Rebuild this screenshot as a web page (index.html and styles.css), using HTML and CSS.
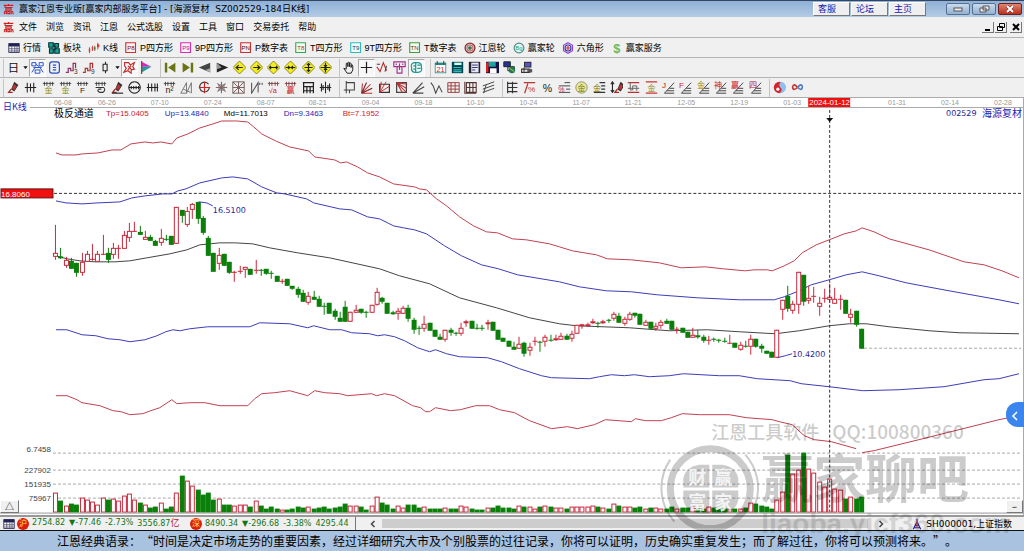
FILE: index.html
```html
<!DOCTYPE html>
<html lang="zh-CN">
<head>
<meta charset="utf-8">
<title>赢家江恩专业版</title>
<link rel="stylesheet" href="styles.css">
</head>
<body>
<div class="app">
  <header class="titlebar">
    <svg class="logo" viewBox="0 0 16 16"><path d="M1 2h14M8 0v2M3 2v3h11M4 7h8v2H4zM2 11v4M2 11h3v4M3 13h2M7 11v3h3v-3zM12 11v4M12 11h2l1 4" fill="none" stroke="#c22" stroke-width="1.5"/></svg>
    <h1 class="title">赢家江恩专业版[赢家内部服务平台] - [海源复材&nbsp; SZ002529-184日K线]</h1>
    <nav class="links"><a href="#service">客服</a><a href="#forum">论坛</a><a href="#home">主页</a></nav>
    <div class="window-controls">
      <button aria-label="最小化"><svg viewBox="0 0 12 8"><rect x="2" y="3" width="8" height="3" fill="#eee" stroke="#555"/></svg></button>
      <button aria-label="还原"><svg viewBox="0 0 12 8"><path d="M5 1h6v4H5zM2 3h6v4H2z" fill="#eee" stroke="#555"/></svg></button>
      <button class="close" aria-label="关闭"><svg viewBox="0 0 12 8"><path d="M3 1l6 6M9 1L3 7" stroke="#722" stroke-width="3"/><path d="M3 1l6 6M9 1L3 7" stroke="#fff" stroke-width="2"/></svg></button>
    </div>
  </header>

  <div class="menubar">
    <svg class="logo" viewBox="0 0 16 16"><path d="M1 2h14M8 0v2M3 2v3h11M4 7h8v2H4zM2 11v4M2 11h3v4M3 13h2M7 11v3h3v-3zM12 11v4M12 11h2l1 4" fill="none" stroke="#c22" stroke-width="1.5"/></svg>
    <nav class="menu">
      <button>文件</button><button>浏览</button><button>资讯</button><button>江恩</button><button>公式选股</button><button>设置</button><button>工具</button><button>窗口</button><button>交易委托</button><button>帮助</button>
    </nav>
    <div class="mdi-controls">
      <button aria-label="最小化窗口"><svg viewBox="0 0 10 8"><path d="M2 7h5" stroke="#000" stroke-width="2"/></svg></button>
      <button aria-label="还原窗口"><svg viewBox="0 0 10 8"><path d="M3.500 .5h5v4h-5zM1.500 3.500h5v4h-5z" fill="#eee" stroke="#000"/></svg></button>
      <button class="mdi-close" aria-label="关闭窗口"><svg viewBox="0 0 10 8"><path d="M2 1l6 6M8 1L2 7" stroke="#000" stroke-width="2"/></svg></button>
    </div>
  </div>

  <div class="toolbar views">
    <button><svg class="icon" viewBox="0 0 16 16"><path d="M1 2h14v12H1z" fill="#fff" stroke="#114"/><path d="M1 2h14v4H1z" fill="#225"/><path d="M1 9h14M1 12h14M5 6v8M9 6v8M12 6v8" stroke="#446"/></svg>行情</button>
    <button><svg class="icon" viewBox="0 0 16 16"><path d="M1 1h6v6H1zM9 2h5v5H9zM2 9h5v6H2zM9 9h6v6H9z" fill="#1aa39a" stroke="#033" stroke-width="1.500"/><path d="M7 4l3 3M7 11l4-3" stroke="#033" stroke-width="2"/></svg>板块</button>
    <button><svg class="icon" viewBox="0 0 16 16"><path d="M2 7v8M6 5v7M9 5v7M13 1v9" stroke="#b22"/><path d="M1 9h2v4H1zM5 7h2v3H5z" fill="#d33"/><path d="M8 7h2v3H8z" fill="#284"/><path d="M12 3h3v4h-3z" fill="#d33"/></svg>K线</button>
    <button><svg class="icon" viewBox="0 0 16 16"><path d="M1 1h13v13H1z" fill="#fee" stroke="#c33" stroke-width="1.500"/><text x="3" y="11" font-size="8" fill="#711">P8</text></svg>P四方形</button>
    <button><svg class="icon" viewBox="0 0 16 16"><path d="M1 1h13v13H1z" fill="#fef" stroke="#c3a" stroke-width="1.500"/><text x="3" y="11" font-size="8" fill="#928">P9</text></svg>9P四方形</button>
    <button><svg class="icon" viewBox="0 0 16 16"><path d="M1 1h13v13H1z" fill="#fee" stroke="#b33" stroke-width="1.500"/><text x="2" y="11" font-size="8" fill="#311">PN</text></svg>P数字表</button>
    <button><svg class="icon" viewBox="0 0 16 16"><path d="M1 1h13v13H1z" fill="#efe" stroke="#3a5" stroke-width="1.500"/><text x="3" y="11" font-size="8" fill="#a33">T8</text></svg>T四方形</button>
    <button><svg class="icon" viewBox="0 0 16 16"><path d="M1 1h13v13H1z" fill="#eff" stroke="#3bb" stroke-width="1.500"/><text x="3" y="11" font-size="8" fill="#235">T9</text></svg>9T四方形</button>
    <button><svg class="icon" viewBox="0 0 16 16"><path d="M1 1h13v13H1z" fill="#efe" stroke="#494" stroke-width="1.500"/><text x="2" y="11" font-size="8" fill="#722">TN</text></svg>T数字表</button>
    <button><svg class="icon" viewBox="0 0 16 16"><g fill="none" stroke-width="1.800"><circle cx="8" cy="8" r="6.500" stroke="#833"/><circle cx="8" cy="8" r="4" stroke="#c77"/><circle cx="8" cy="8" r="1.500" stroke="#164"/></g></svg>江恩轮</button>
    <button><svg class="icon" viewBox="0 0 16 16"><circle cx="8" cy="8" r="6.500" fill="#e8f4ee" stroke="#588" stroke-width="1.500"/><text x="3" y="10" font-size="8" fill="#2a6">Bg</text></svg>赢家轮</button>
    <button><svg class="icon" viewBox="0 0 16 16"><g fill="none" stroke-width="1.500"><path d="M8 1l6 3.500v7L8 15l-6-3.500v-7z" stroke="#84c"/><circle cx="8" cy="8" r="4" stroke="#33a"/><circle cx="8" cy="8" r="1.500" stroke="#c33"/></g></svg>六角形</button>
    <button><svg class="icon" viewBox="0 0 16 16"><text x="3" y="14" font-size="17" font-weight="bold" fill="#6b6">$</text></svg>赢家服务</button>
  </div>

  <div class="toolbar" id="nav-tools"></div>
  <div class="toolbar" id="draw-tools"></div>

  <main class="chart">
    <svg class="plot" id="plot" viewBox="0 97 1024 418" role="img" aria-label="海源复材 日K线图"></svg>
    <svg class="watermark" viewBox="0 97 1024 418" aria-hidden="true">
      <g class="wm-ink">
        <text x="712" y="439" font-size="18" font-weight="500">江恩工具软件</text>
        <text x="833" y="439" font-size="19" font-weight="500">QQ:100800360</text>
        <text x="762" y="498" font-size="52" font-weight="bold">赢家聊吧</text>
        <text class="wm-url" x="762" y="533" font-size="28" font-weight="bold">liaoba.yicf360.com</text>
        <circle cx="711" cy="489" r="40" fill="none" stroke="#000" stroke-width="7"/>
        <path d="M671 460a50 50 0 0 0 4 62M746 455a50 50 0 0 1 10 50" fill="none" stroke="#000" stroke-width="2"/>
        <path d="M710 465v23h-26v-9q2-12 16-14zM713 465v23h26v-9q-2-12-16-14zM710 514v-23h-26v9q2 12 16 14zM713 514v-23h26v9q-2 12-16 14z"/>
      </g>
      <g class="wm-seal" font-size="18"><text x="689" y="484">财</text><text x="715" y="484">赢</text><text x="689" y="509">富</text><text x="715" y="509">家</text></g>
    </svg>
    <button class="corner corner-left" aria-label="展开">△</button>
    <button class="corner corner-right" aria-label="收起">−</button>
    <button class="side-tab" aria-label="打开侧栏"><svg viewBox="0 0 8 12"><path d="M6 2L2 6l4 4" fill="none" stroke="#fff" stroke-width="1.600"/></svg></button>
  </main>

  <div class="status">
    <svg class="icon" viewBox="0 0 16 16"><path d="M1 2h14v12H1z" fill="#fff" stroke="#114"/><path d="M1 2h14v4H1z" fill="#225"/><path d="M1 9h14M1 12h14M5 6v8M9 6v8M12 6v8" stroke="#446"/></svg>
    <span class="badge">沪</span>
    <div class="quote"><span>2754.82</span><span>▼-77.46</span><span>-2.73%</span><span>3556.87<span class="unit">亿</span></span></div>
    <span class="badge">深</span>
    <div class="quote second"><span>8490.34</span><span>▼-296.68</span><span>-3.38%</span><span>4295.44</span></div>
    <div class="scroll">
      <button aria-label="向左滚动"><svg viewBox="0 0 8 8"><path d="M5.500 1l-3 3 3 3" fill="none" stroke="#444" stroke-width="1.500"/></svg></button>
      <div class="thumb"></div>
      <button aria-label="向右滚动"><svg viewBox="0 0 8 8"><path d="M2.500 1l3 3-3 3" fill="none" stroke="#444" stroke-width="1.500"/></svg></button>
    </div>
    <div class="index">
      <svg class="icon" viewBox="0 0 16 16"><path d="M8 1v5M8 5L3 15M8 5l5 10M5 10h6M4 13h8" stroke="#229" stroke-width="1.500" fill="none"/><path d="M7 4h2v9H7z" fill="#c55"/></svg>
      <span>SH000001,上证指数</span>
    </div>
  </div>
  <footer class="ticker">江恩经典语录：“时间是决定市场走势的重要因素，经过详细研究大市及个别股票的过往记录，你将可以证明，历史确实重复发生；而了解过往，你将可以预测将来。”。</footer>
</div>
<script src="script.js"></script>
</body>
</html>
```

FILE: styles.css
```css
* { box-sizing: border-box; }

body {
  margin: 0;
  background: #fff;
  color: #000;
  font: 9px/12px "Liberation Sans", "Noto Sans CJK SC", sans-serif;
}

button {
  margin: 0;
  padding: 0;
  border: 0;
  background: none;
  color: inherit;
  font: inherit;
  white-space: nowrap;
}

.app {
  display: flex;
  flex-direction: column;
  min-height: 100vh;
}

.titlebar {
  display: flex;
  align-items: center;
  height: 17px;
  padding: 0 2px 0 3px;
  border-top: 1px solid #34455f;
  background: linear-gradient(#8fb0d6, #b3cbe5);
}

.logo {
  width: 11px;
  height: 11px;
  margin-right: 5px;
}

.title {
  flex: 1;
  margin: 0;
  font-family: "DejaVu Sans", "Noto Sans CJK SC", sans-serif;
  font-size: 9px;
  font-weight: normal;
  white-space: nowrap;
}

.links {
  display: flex;
  gap: 1px;
  margin-right: 20px;
}

.links a {
  width: 37px;
  height: 14px;
  padding-left: 4px;
  border: 1px solid #fff;
  border-right-color: #777;
  border-bottom-color: #777;
  background: #efefef;
  color: #1515b0;
  text-decoration: none;
}

.window-controls {
  display: flex;
  gap: 2px;
}

.window-controls button {
  display: grid;
  place-items: center;
  width: 24px;
  height: 12px;
  border: 1px solid #58708f;
  border-radius: 2px;
  background: linear-gradient(#c9daec, #93b1d1);
}

.window-controls svg {
  width: 12px;
  height: 8px;
}

.window-controls .close {
  background: linear-gradient(#dd8574, #b9301c);
  border-color: #702018;
}

.menubar {
  display: flex;
  align-items: center;
  height: 20px;
  padding: 0 2px 0 3px;
  background: #f0f0f0;
}

.menu {
  display: flex;
  flex: 1;
  gap: 9px;
}

.mdi-controls {
  display: flex;
  gap: 1px;
}

.mdi-controls button {
  display: grid;
  place-items: center;
  width: 12px;
  height: 11px;
  border-right: 1px solid #777;
  border-bottom: 1px solid #777;
}

.mdi-controls .mdi-close { margin-left: 2px; }

.mdi-controls svg {
  width: 10px;
  height: 8px;
}

.toolbar {
  display: flex;
  align-items: center;
  height: 20px;
  padding-left: 3px;
  border-top: 1px solid #b4b4b4;
  background: #f0f0f0;
}

.views {
  gap: 7px;
  padding-left: 8px;
}

.views button {
  display: flex;
  align-items: center;
  gap: 3px;
}

.icon {
  flex: none;
  width: 12px;
  height: 12px;
}

.icon text, .tool text { font-family: "Liberation Sans", "Noto Sans CJK SC", sans-serif; }

.group {
  display: flex;
  height: 18px;
  padding-left: 1px;
  border-left: 1px solid #c4c4c4;
}

.group + .group { margin-left: 5px; }

.tool {
  display: grid;
  place-items: center;
  width: 17px;
  height: 18px;
}

.even { display: grid; grid-auto-flow: column; grid-auto-columns: 1fr; }
.even .tool { width: auto; }
.w35 { width: 37px; }
.w86 { width: 86px; }
.w104 { width: 105px; }
.w156 { width: 158px; }
.w173 { width: 174px; }
.w260 { width: 262px; }
.w329 { width: 331px; }

.tool svg {
  width: 13px;
  height: 13px;
}

.tool.caret { width: 7px; }

.tool.caret svg {
  width: 5px;
  height: 5px;
}

.tool.on {
  border: 1px solid #a9a9a9;
  border-right-color: #fff;
  border-bottom-color: #fff;
  background: #f8f8f8;
}

.chart {
  position: relative;
  flex: 1;
  border-right: 1px solid #aaa;
}

.plot {
  display: block;
  width: 100%;
}

.watermark {
  position: absolute;
  z-index: 2;
  top: 0;
  left: 0;
  width: 100%;
  overflow: visible;
  pointer-events: none;
}

.wm-ink {
  opacity: .2;
  font-family: "Noto Sans CJK SC", sans-serif;
}

.wm-url { font-family: "Liberation Sans", sans-serif; opacity: .6; }

.wm-seal {
  fill: #fff;
  font-family: "Noto Sans CJK SC", sans-serif;
  font-weight: bold;
  opacity: .8;
}

.small { font: 8px "Liberation Sans", sans-serif; }
.dates { font: 7px "Liberation Sans", sans-serif; fill: #999; }
.legend { font: 8px "Liberation Sans", sans-serif; }
.cjk { font: 10px "Noto Sans CJK SC", sans-serif; }
.period { font: 9px "Noto Sans CJK SC", sans-serif; }
.wide { font: 8px "DejaVu Sans", sans-serif; fill: #1c1c9c; }
.blue { fill: #1c1cb4; }
.scale { fill: #444; }
.up { fill: #fff; stroke: #c8283c; }
.up-line { stroke: #c8283c; }
.down { fill: #0a800a; }
.down-line { stroke: #0a800a; }

.corner {
  position: absolute;
  bottom: 2px;
  height: 13px;
  border: 1px solid #fff;
  border-right-color: #777;
  border-bottom-color: #777;
  background: #f0f0f0;
  line-height: 10px;
}

.corner-left { left: 0; width: 19px; }
.corner-right { right: 0; width: 17px; }

.side-tab {
  position: absolute;
  z-index: 3;
  top: 305px;
  right: -1px;
  width: 18px;
  height: 25px;
  border-radius: 12px 0 0 12px;
  background: #3a86ee;
}

.side-tab svg {
  width: 8px;
  height: 12px;
  margin-top: 6px;
}

.status {
  display: flex;
  align-items: center;
  height: 15px;
  padding-left: 3px;
  border-top: 2px solid #999;
  background: #f0f0f0;
}

.badge {
  width: 12px;
  height: 12px;
  margin-left: 2px;
  border-radius: 50%;
  background: #e01b10;
  color: #ffe84a;
  font-size: 8px;
  text-align: center;
}

.quote {
  display: flex;
  gap: 4px;
  width: 156px;
  margin-left: 3px;
  color: #157515;
  font: 8px/12px "DejaVu Sans", "Noto Sans CJK SC", sans-serif;
  white-space: nowrap;
}

.unit {
  color: #b02030;
  font-size: 9px;
}

.quote.second { width: 150px; }

.scroll {
  display: flex;
  flex: 1;
  align-items: center;
  height: 13px;
  border-left: 1px solid #777;
  background: #f0f0f0;
}

.scroll button {
  display: grid;
  place-items: center;
  width: 26px;
}

.scroll button:first-child { padding-left: 8px; }

.scroll svg {
  width: 8px;
  height: 8px;
}

.thumb {
  flex: 1;
  height: 9px;
  background: #cdcdcd;
}

.index {
  display: flex;
  align-items: center;
  gap: 3px;
  padding: 0 12px 0 17px;
  font: 9px/12px "DejaVu Sans", "Noto Sans CJK SC", sans-serif;
}

.ticker {
  height: 21px;
  padding-left: 57px;
  border-top: 1px solid #111;
  background: #a9c2df;
  font: 12px/20px "Noto Sans CJK SC", sans-serif;
  text-spacing-trim: space-all;
  white-space: nowrap;
}
```

FILE: script.js
```js
// Icon artwork on a 16-unit grid.
const line = (d, c = '#222', w = 1.3) => `<path d="${d}" fill="none" stroke="${c}" stroke-width="${w}"/>`;
const fill = (d, c) => `<path d="${d}" fill="${c}"/>`;
const txt = (s, x, y, size, c) => `<text x="${x}" y="${y}" font-size="${size}" fill="${c}">${s}</text>`;
const comb = (c = '#333') => line('M1 3h14M3 1v5M6 1v5M10 1v5M13 1v5', c, 1);
const diamond = d => `<path d="M8 0l8 8-8 8-8-8z" fill="#f4ee20" stroke="#77720a"/>` + line(d, '#221', 1.4);
const fan = (s, c) => line('M3 15L15 2M3 15h12M6 12h9M9 9h6', '#444', 1.2) + txt(s, 0, 9, 10, c);
const pen = fill('M9 1l5 4-5 8-4-3z', '#333') + fill('M9 4l3 2-3 5-3-2z', '#b33') + line('M5 10l-3 4h5', '#a22', 1.5);
const rays = c => line('M2 15L3 3M2 15L8 2M2 15L13 4M2 15L15 9M2 15h13', c, 1.3);
const steps = (c, n) => line('M1 14h3v-5h3v3h3V3h3v6', c, 1.5) + txt(n, 11, 16, 8, '#333');

const caret = ['caret', '选项', fill('M1 4h14L8 13z', '#111')];
const navGroups = [
  ['', [
    ['', '日线', txt('日', 1, 14, 14, '#111')], caret,
    ['on', '分时', line('M1 2h5v4H1zM10 2h5v4h-5zM3 8h10M1 14l4-6M15 14l-4-6M5 11h6v4H5zM6 4l4 3', '#2850c8', 1.2)],
    ['', '资料', line('M2 4q0-3 3-3h6q3 0 3 3v8q0 3-3 3H5q-3 0-3-3zM6 5h4M6 8h4M6 11h4', '#2850c8', 1.5)],
    ['', '三段', steps('#836', '3')], ['', '九段', steps('#a33', '9')],
    ['', '蜡烛', line('M8 1v3M8 12v3M5 4h5v8H5z')], caret,
    ['on', '缠论', line('M2 2h5l2 3 5-3-2 5 2 3-4 1v4l-4-3-5 2 3-5-2-3zM6 6l5 5M6 11l4-5', '#c02c2c', 1.4)],
    ['', '筹码', fill('M2 1l12 6H2z', '#d02ac8') + fill('M2 7h12L2 14z', '#1d9f9a') + line('M2 0v16', '#c22', 1.5)]
  ]],
  ['even w173', [
    ['', '最前', fill('M1 2h3v12H1zM14 2v12L5 8z', '#6a7414')],
    ['', '最后', fill('M12 2h3v12h-3zM2 2v12l9-6z', '#6a7414')],
    ['', '前一', fill('M1 8L15 2v12z', '#444') + fill('M15 9v5l-6-3z', '#aaa')],
    ['', '后一', fill('M15 8L1 2v12z', '#222') + fill('M1 2l6 6-6 2z', '#999')],
    ['', '左移', diamond('M12 8H4l3-3M4 8l3 3')],
    ['', '右移', diamond('M4 8h8L9 5M12 8l-3 3')],
    ['', '扩展', diamond('M3 8h10M5 6L3 8l2 2M11 6l2 2-2 2')],
    ['', '压缩', diamond('M2 8h12M5 6l2 2-2 2M11 6L9 8l2 2')],
    ['', '上下', diamond('M3 8h10M8 3v10M6 5l2-2 2 2M6 11l2 2 2-2')],
    ['', '缩放', diamond('M2 8h12M8 2v5M6 5l2 2 2-2M8 14V9M6 11l2-2 2 2')]
  ]],
  ['even w86', [
    ['', '拖动', line('M5 15l-4-6 3 1V3q1-1 2 0v4-5q1-1 2 0v5-4q1-1 2 0v5-3q2-1 2 1v5l-2 4z', '#222', 1.2)],
    ['on', '十字', line('M8 1v14M1 8h14', '#222', 1.5)],
    ['', '折线', line('M1 7l4 6 4-11 4 10', '#b22', 1.3) + line('M13 6l-2 7M1 4h4', '#444', 1.3)],
    ['', '结构', line('M1 1h14v6H1zM5 7h6v8H5zM4 3v2M8 3v8M12 3v2', '#a2308f', 1.4)],
    ['on', '智能', line('M5 2q-5 2-3 6-1 5 4 6h4q6-1 4-6 1-6-5-6zM7 2v12M4 6h3M9 5h4M9 9h4M4 10h3', '#1a9a92', 1.5)]
  ]],
  ['even w104', [
    ['', '日历', fill('M1 2h14v13H1z', '#2a8886') + fill('M2 5h12v9H2z', '#fff') + line('M4 0v4M12 0v4', '#444', 1.2) + txt('21', 3, 13, 9, '#c22')],
    ['', '计算器', fill('M1 1h14v14H1z', '#045') + fill('M4 2h9v3H4z', '#cfe') + line('M3 8h10M3 11h10M3 13h10', '#39b8b0', 1.5)],
    ['', '笔记', fill('M1 1h14v14H1z', '#223') + fill('M4 2h9v12H4z', '#e8e8ff') + line('M5 5h7M5 8h7M5 11h4', '#336', 1.2)],
    ['', '保存', fill('M0 1h16v14H0z', '#114') + fill('M3 1h9v6H3z', '#1ba2a2') + fill('M0 2h3v12H0z', '#d22') + fill('M5 9h8v6H5z', '#fff')],
    ['', '联网', fill('M1 1h8v6H1z', '#239') + line('M1 1h8v6H1zM6 7h8v5H6z', '#222', 1.2) + '<circle cx="11" cy="11" r="4" fill="#275"/>' + line('M8 9l6 4', '#cd4', 1)],
    ['', '远程', fill('M5 1h9v7H5z', '#222') + fill('M6 2h7v5H6z', '#55b') + line('M2 10h10v4H2zM5 8v5', '#333', 1.3) + fill('M9 10h6v4H9z', '#555')]
  ]]
];

const drawGroups = [
  ['even w329', [
    ['', '画笔', pen], ['', '标尺', line('M1 8h14M4 2v12M8 3v10M12 2v12')],
    ['', '金分割', comb() + txt('金', 3, 15, 10, '#8a8a10')], ['', '金扩展', comb() + txt('金', 3, 15, 10, '#8a8a10')],
    ['', 'F周期', comb() + txt('F', 5, 15, 10, '#222')],
    ['', '螺旋', comb() + line('M2 8h10q3 3-1 6H7q-4-2-1-4h3', '#333', 1.3)],
    ['', '标记', pen + line('M1 15h14', '#333', 1.5)],
    ['', '圆尺', line('M8 1a7 7 0 1 0 .1 0M1 8h14M4 6v4M7 6v4M10 6v4M13 6v4')],
    ['', '等距', line('M1 8h14M3 3v10M7 3v10M11 3v10M14 3v10')],
    ['', '平方', comb() + txt('n²', 3, 15, 11, '#222')],
    ['', '角度', line('M1 15L8 2v13M1 15h7l6-13v13M4 10l9 4', '#777', 1.2)],
    ['', '圆心', line('M13 4a6 6 0 1 0 1 4', '#444', 1.5) + line('M8 1v14M1 8h14', '#c22', 1.4)],
    ['', '星线', line('M8 1v14M1 8h14M3 3l10 10M13 3L3 13', '#866', 1.3) + line('M5 5h6v6H5z', '#777')],
    ['', '星格', line('M1 1h14v14H1zM8 1v14M1 8h14M1 1l14 14M15 1L1 15', '#776060', 1.2)],
    ['', '斜线', line('M2 2v13L10 2v12M12 2v3M15 2v3', '#555', 1.3)],
    ['', '根号', comb('#733') + txt('√a', 2, 15, 9, '#c22')],
    ['', '赢周期', comb('#733') + txt('赢', 3, 15, 10, '#c22')],
    ['', '宫格', line('M1 2h14M2 2v13M14 2v13M2 7h12M2 12h12M6 7v8M10 7v8', '#222', 1.5)],
    ['', '对称', line('M1 8h14M3 3v10M8 1v14M13 3v10M5 5v6M11 5v6')]
  ]],
  ['even w156', [
    ['', '矩形', line('M4 2h10v9H4zM1 11h13M4 0v15M8 11v4', '#444', 1.3)],
    ['', '扇形', rays('#b33') + line('M2 15L8 2M2 15L15 9', '#333', .8)],
    ['', '扇格', line('M2 4h12v10H2z', '#333', 1.5) + line('M2 14L4 1M2 14L10 1M2 14L15 6', '#b33', 1.2)],
    ['', '方扇', line('M2 2h12v12H2z', '#444', 1.5) + line('M2 2l12 12M2 2l12 7M2 2l7 12M2 2l13 2', '#b33', 1.3)],
    ['', '射线', line('M1 15L13 2M1 15L15 7M1 15h13', '#444', 1.4)],
    ['', '波浪', line('M1 2l3 4 3 9 4-9 4 8', '#444', 1.3)],
    ['', '红格', line('M1 2h14v12H1zM5 2v12M10 2v12M1 6h14M1 10h14', '#933', 1.1)],
    ['', '黑格', line('M1 1v14h14M3 2h12v12H3zM7 2v12M11 2v12M3 8h12', '#533', 1.3)],
    ['', '平行线', line('M1 14L15 9M1 10L15 5M1 6L15 1M5 5L2 15', '#444', 1.2)]
  ]],
  ['even w260', [
    ['', '阶梯', line('M2 1v14M8 1v14M2 3h12M2 8h12M2 13h12', '#333', 1.4)],
    ['', '百分高低', line('M1 2h14M6 3L2 15', '#b33', 1.5) + txt('%', 6, 14, 10, '#b33')],
    ['', '百分比', txt('%', 2, 13, 13, '#222')],
    ['', '百分线', line('M8 2h7M1 6h14M10 10h5M1 14h14', '#444', 1.2) + txt('%', 0, 13, 9, '#c22')],
    ['', '金圆', '<circle cx="8" cy="8" r="7" fill="#e9e79a" stroke="#886"/>' + txt('金', 3, 12, 10, '#77770c')],
    ['', '金线', line('M8 2h7M10 6h5M10 10h5M1 14h14', '#333', 1.4) + txt('金', 0, 12, 10, '#77770c')],
    ['', '测量', line('M3 1v13M1 4l2-3 2 3M1 11l2 3 2-3', '#222', 1.3) + `<g transform="translate(4 0)">${pen}</g>`],
    ['', '区间', line('M1 2h14M1 14h14', '#b33', 1.4) + line('M4 2v9h3V6h5v6M1 9h14', '#666', 1.2)],
    ['', '金区间', line('M1 1h14M1 15h14', '#c33', 1.5) + txt('金', 3, 12, 10, '#998a10')],
    ['', 'J扇', fan('J', '#a22')], ['', 'F扇', fan('F', '#d22')], ['', '金扇', fan('金', '#998a10')],
    ['', '神扇', fan('神', '#c22')], ['', '赢扇', fan('赢', '#c22')], ['', '四扇', fan('四', '#a22')]
  ]],
  ['even w35', [
    ['', '八卦', '<circle cx="8" cy="8" r="7" fill="#d4242c"/>' + fill('M10 1a7 7 0 0 1-2 14q5-4 1-7-3-4 1-7z', '#8fc0ee') + '<circle cx="6" cy="10" r="2" fill="#fff"/>'],
    ['', '无限', line('M8 8q-4-6-6-1 0 6 6 1', '#c33', 2) + line('M8 8q5-6 6-1 0 6-6 1', '#4b7cc0', 2)]
  ]]
];

function fillToolbar(id, groups) {
  document.getElementById(id).innerHTML = groups.map(([cls, tools]) =>
    `<div class="group ${cls}">` + tools.map(([state, label, art]) =>
      `<button class="tool ${state}" aria-label="${label}"><svg viewBox="0 0 16 16">${art}</svg></button>`
    ).join('') + '</div>').join('');
}
fillToolbar('nav-tools', navGroups);
fillToolbar('draw-tools', drawGroups);

// One row per day: direction, body top, body bottom, high, low, volume top.
const days = `
r 253 256 225 259 493|g 257 258 248 258 501|r 260 265 257 267 506|g 261 268 258 268 504|g 263 272 263 276 505
r 262 272 253 275 498|r 254 261 251 261 500|r 259 259 244 260 502|r 254 261 251 261 505|r 254 254 235 254 498
g 253 259 248 262 500|r 248 254 243 258 499|r 248 248 245 258 501|r 235 248 231 248 496|r 231 237 223 241 494
r 231 231 222 231 500|g 232 234 226 234 503|r 237 239 231 239 505|g 237 240 235 240 508|g 241 245 240 245 507
r 238 242 229 245 503|g 239 239 235 240 509|g 236 244 236 244 507|r 207 243 207 243 493|g 210 215 210 222 476
r 211 224 207 226 481|r 204 209 203 218 486|g 202 218 202 223 490|g 218 232 216 234 495|g 238 255 236 255 493
g 253 271 253 271 500|r 255 263 248 269 499|g 254 265 254 265 505|g 262 272 262 273 505|r 272 272 271 281 506
r 271 271 266 273 505|r 267 269 267 277 505|g 269 274 269 274 507|r 270 270 260 273 501|g 270 270 269 275 506
g 269 273 269 274 509|g 273 273 271 278 507|g 276 281 276 281 509|r 281 281 279 283 510|g 279 285 279 285 510
g 286 288 286 289 509|g 289 294 287 297 507|g 293 301 290 301 508|r 296 302 292 304 507|g 297 299 291 299 509
g 299 306 296 306 508|g 306 306 303 314 507|g 303 313 303 313 509|g 311 316 309 319 508|g 318 321 312 321 507
g 307 321 301 321 504|r 312 321 312 321 506|r 310 312 305 312 506|g 309 312 309 313 507|g 312 312 311 317 510
r 305 312 305 312 506|r 292 304 288 305 497|g 298 301 297 303 503|g 303 313 303 313 505|g 313 314 311 314 509
r 311 313 308 319 506|r 308 313 306 313 508|g 308 318 305 321 505|g 320 329 318 333 505|g 328 328 326 334 508
r 324 328 316 331 507|g 323 330 323 330 509|g 330 336 330 336 509|g 337 339 334 339 509|r 330 339 330 341 508
g 330 332 328 335 509|g 333 333 332 335 509|r 328 333 323 335 506|r 322 323 320 326 507|g 321 328 321 328 509
g 328 328 324 329 510|g 328 328 325 330 510|r 323 324 320 329 508|g 322 330 322 330 508|g 330 339 330 339 506
g 338 341 338 341 508|g 341 346 341 346 508|g 347 349 342 349 509|r 344 348 337 348 506|g 343 353 342 356 507
r 347 350 343 355 507|r 341 341 337 345 509|g 342 342 341 351 507|r 337 341 335 346 506|g 340 340 335 341 507
r 339 340 335 340 508|r 336 339 333 339 508|g 336 339 334 339 509|r 334 338 331 341 507|r 325 333 325 333 507
r 325 326 324 328 507|r 325 326 323 326 507|r 322 323 319 323 506|g 323 323 322 327 507|r 322 323 320 323 508
g 320 320 319 322 509|r 314 318 312 320 504|g 316 322 313 322 506|r 319 323 317 325 507|r 314 319 312 320 507
g 313 315 313 317 508|g 314 324 314 324 507|r 322 325 320 325 509|g 322 328 322 329 508|r 326 328 323 330 508
r 322 325 320 328 509|g 321 323 319 323 509|g 321 329 321 329 507|r 329 329 327 333 509|g 328 332 328 332 508
g 332 337 332 337 508|r 335 337 328 337 507|g 336 337 330 338 509|g 337 340 335 342 509|r 340 340 336 344 507
g 339 339 338 341 508|g 340 340 339 342 509|g 341 341 338 342 509|r 343 343 335 343 509|g 343 347 343 347 509
r 345 349 342 350 509|g 346 346 341 347 508|r 339 346 335 354 503|g 339 346 339 347 504|g 346 348 344 352 506
g 351 353 351 353 507|g 352 357 352 357 509|r 330 357 330 357 500|r 300 309 300 319 492|g 296 308 286 311 455
r 304 310 301 313 474|r 272 304 272 313 470|g 275 301 275 305 453|r 298 300 286 303 469|r 296 296 287 302 473
r 303 306 297 315 482|r 298 298 289 302 487|r 297 299 284 302 479|r 299 303 288 303 489|r 299 299 295 309 490
g 300 313 300 313 499|r 314 317 309 322 497|g 311 324 311 326 499|g 329 348 329 348 497
`.trim().split(/[|\n]/).map(row => row.split(' '));

const bars = days.map(([dir, ...nums], i) => {
  const [top, bottom, high, low, vol] = nums.map(Number);
  const x = Math.round(55.2 + i * 5.272);
  const kind = dir === 'r' ? 'up' : 'down';
  const wick = `<path class="${kind}-line" d="M${x + .5} ${high}V${low + 1}"/>`;
  const block = (t, b) => dir === 'r'
    ? `<rect class="up" x="${x - 1.5}" y="${t + .5}" width="4" height="${b - t}"/>`
    : `<rect class="down" x="${x - 2}" y="${t}" width="5" height="${b - t + 1}"/>`;
  const body = bottom - top < 2
    ? `<path class="${kind}-line" d="M${x - 2} ${top + .5}h5" ${bottom > top ? 'stroke-width="2"' : ''}/>`
    : block(top, bottom);
  return wick + body + block(vol, 512);
}).join('');

const curve = (points, color) => `<polyline points="${points}" fill="none" stroke="${color}"/>`;
const red = '#c04050', blue = '#3c3cb8';
const curves = [
  ['56,153 62,155 76,155 82,154 98,153 112,150 121,150 131,144 145,142 153,143 161,142 172,144 177,138 188,134 200,128 213,124 222,121 237,121 248,122 254,127 262,134 276,141 290,147 309,151 315,157 335,160 341,163 347,162 358,167 368,173 380,177 394,184 415,187 420,189 427,190 437,199 447,206 460,217 474,226 487,232 498,233 513,239 527,240 550,244 560,247 573,251 597,255 608,259 632,260 660,263 682,268 706,267 724,269 746,271 755,270 768,270 773,271 785,266 795,261 803,253 817,245 830,240 845,234 857,231 863,228 875,232 890,239 930,250 965,262 985,265 1003,271 1020,278', red],
  ['56,201 66,203 82,204 98,203 120,202 132,198 145,196 163,194 172,194 178,191 186,189 200,183 222,178 233,177 248,179 262,187 277,193 285,194 307,199 314,203 340,209 352,210 368,217 380,219 394,226 404,228 415,230 427,234 445,246 462,256 482,265 499,269 518,275 560,282 580,287 607,291 632,292 658,295 698,298 740,300 775,300 785,297 800,291 812,285 830,280 847,275 863,272 880,276 907,283 950,291 1000,300 1020,304', blue],
  ['56,256 67,259 80,261 95,262 115,262 130,261 147,258 170,254 187,250 200,245 220,243 235,243 253,244 270,248 298,253 330,258 380,269 400,276 430,284 460,298 497,308 530,318 560,324 577,326 630,328 670,331 708,330 740,332 776,334 800,331 830,326 850,324 867,324 890,327 930,331 960,333 1020,334', '#444'],
  ['56,330 67,330 82,335 96,336 108,339 120,340 130,342 145,340 157,336 166,332 173,330 180,331 190,329 208,327 250,327 260,323 290,324 308,328 314,326 330,330 342,330 352,333 370,334 378,336 385,335 395,337 405,341 418,348 430,352 436,350 447,354 460,357 488,358 502,362 520,369 542,376 552,378 590,379 600,377 612,375 625,376 635,375 650,377 670,376 684,374 720,376 740,376 758,379 791,381 802,384 830,387 855,390 864,391 900,390 945,387 985,380 1000,379 1012,376 1020,374', blue],
  ['56,396 67,396 77,400 82,403 100,406 113,411 121,412 130,415 143,414 151,411 160,408 172,400 177,404 190,403 205,403 220,406 248,406 255,399 262,394 275,393 290,391 308,396 315,391 325,393 340,394 348,396 372,394 377,396 385,394 395,396 413,406 421,408 426,412 430,412 436,408 451,411 461,410 476,406 490,406 500,410 515,413 530,421 552,429 568,427 578,429 595,425 606,420 632,422 636,419 646,421 662,421 672,418 683,414 700,415 730,415 747,418 773,420 780,422 793,425 805,436 815,440 832,442 857,449', red],
  ['863,453 875,451 920,440 960,430 1000,420 1010,418', red]
].map(([p, c]) => curve(p, c)).join('');

const dates = [[54, '06-08'], [98, '06-26'], [151, '07-10'], [204, '07-24'], [257, '08-07'], [309, '08-21'], [362, '09-04'], [415, '09-18'], [467, '10-10'], [520, '10-24'], [573, '11-07'], [625, '11-21'], [678, '12-05'], [731, '12-19'], [784, '01-03'], [889, '01-31'], [942, '02-14'], [995, '02-28']]
  .map(([x, d]) => `<text x="${x}" y="105">${d}</text>`).join('');
const grid = [453.5, 470.5, 484.5, 498.5].map(y => `<path d="M53 ${y}H1022"/>`).join('');
const scale = [[452, '6.7458'], [473, '227902'], [487, '151935'], [501, '75967']]
  .map(([y, v]) => `<text x="51" y="${y}" text-anchor="end">${v}</text>`).join('');

document.getElementById('plot').innerHTML = `
  <path d="M0 97.5H1024M30 107.500H1024" stroke="#aaa"/>
  <g class="dates">${dates}</g>
  <rect x="809" y="98" width="42" height="9" fill="#f01010"/>
  <text class="small" x="810" y="105" fill="#fff">2024-01-12</text>
  <text class="period blue" x="3" y="110">日K线</text>
  <text class="cjk" x="54" y="117">极反通道</text>
  <g class="legend">
    <text x="106" y="116" fill="#d01828">Tp=15.0405</text>
    <text x="165" y="116" class="blue">Up=13.4840</text>
    <text x="224" y="116">Md=11.7013</text>
    <text x="284" y="116" class="blue">Dn=9.3463</text>
    <text x="343" y="116" fill="#d01828">Bt=7.1952</text>
  </g>
  <text class="wide" x="947" y="116">002529</text>
  <text class="cjk blue" x="983" y="117">海源复材</text>
  <g stroke="#aaa" stroke-dasharray="3 2">${grid}<path d="M865 348.500H1022"/></g>
  <g class="small scale">${scale}</g>
  <rect x="1" y="189" width="52" height="9" fill="#f01010" stroke="#611"/>
  <text class="small" x="1" y="197" fill="#fff">16.8060</text>
  <path d="M54 193.500H1022" stroke="#333" stroke-dasharray="3 2"/>
  ${curves}${bars}
  <path d="M830.500 110V512" stroke="#333" stroke-dasharray="3 2"/>
  <path d="M827 118h7l-3.500 4z" fill="#111"/>
  <path d="M199 202l8 1 6 3M778 358l8-2 7-2" fill="none" stroke="#3c3cb8"/>
  <text class="wide" x="213" y="213">16.5100</text>
  <text class="wide" x="793" y="357">10.4200</text>
  <path d="M0 513.500H1024" stroke="#999"/>`;
```
